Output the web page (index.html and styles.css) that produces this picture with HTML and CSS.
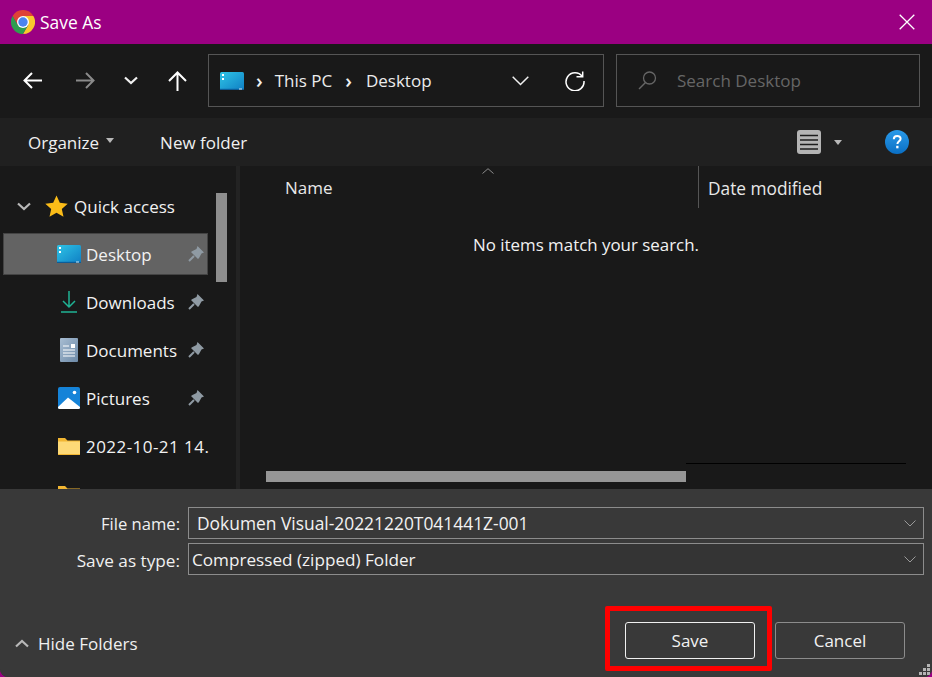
FILE: index.html
```html
<!DOCTYPE html>
<html lang="en">
<head>
    <meta charset="UTF-8">
    <meta name="viewport" content="width=device-width, initial-scale=1.0">
    <title>Save As</title>
    <link rel="stylesheet" href="styles.css">
</head>
<body>
    <div class="dialog">
        <div class="titlebar">
            <svg class="chrome-icon" width="24" height="24" viewBox="1 1 22 22">
                <path d="M21.53 6.500H12L7.240 14.750 2.470 6.500a11 11 0 0 1 19.060 0z" fill="#df4236"/>
                <path d="M21.530 6.500A11 11 0 0 1 12 23l4.760-8.250L12 6.500z" fill="#f9c72d"/>
                <path d="M12 23A11 11 0 0 1 2.470 6.500l4.770 8.250h9.520z" fill="#2f9e4f"/>
                <circle cx="12" cy="12" r="5.500" fill="#fff"/>
                <circle cx="12" cy="12" r="4.300" fill="#4a84ee"/>
            </svg>
            <span class="title">Save As</span>
            <svg class="close-icon" width="16" height="16" viewBox="0 0 16 16">
                <path d="M.7.7l14.6 14.6M15.300.7.7 15.300" stroke="#fff" stroke-width="1.300" fill="none"/>
            </svg>
        </div>

        <div class="navbar">
            <div class="nav-buttons">
                <svg class="nav-back" width="19" height="17" viewBox="0 0 19 17">
                    <path d="M1 8.500h18M9 1 1.500 8.500 9 16" stroke="#fff" stroke-width="2" fill="none"/>
                </svg>
                <svg class="nav-forward" width="19" height="17" viewBox="0 0 19 17">
                    <path d="M0 8.500h18M10 1l7.500 7.500L10 16" stroke="#8a8a8a" stroke-width="2" fill="none"/>
                </svg>
                <svg class="nav-recent" width="14" height="9" viewBox="0 0 14 9">
                    <path d="M1 1.500l6 5.500 6-5.500" stroke="#f0f0f0" stroke-width="2.200" fill="none"/>
                </svg>
                <svg class="nav-up" width="19" height="20" viewBox="0 0 19 20">
                    <path d="M9.500 20V2M1 10 9.500 1.500 18 10" stroke="#fff" stroke-width="2" fill="none"/>
                </svg>
            </div>
            <div class="address">
                <svg class="desktop-icon" width="24" height="18" viewBox="0 0 24 18">
                    <use href="#desktop-shape"/>
                </svg>
                <span class="crumb-sep">›</span>
                <span class="crumb">This PC</span>
                <span class="crumb-sep crumb-sep-wide">›</span>
                <span class="crumb">Desktop</span>
                <svg class="address-chevron" width="17" height="10" viewBox="0 0 17 10">
                    <path d="M.7.7l7.800 7.800L16.300.7" stroke="#f0f0f0" stroke-width="1.500" fill="none"/>
                </svg>
                <svg class="refresh" width="20" height="20" viewBox="0 0 20 20">
                    <path d="M17.300 5.500A9 9 0 1 0 19 10" stroke="#fff" stroke-width="1.500" fill="none"/>
                    <path d="M11.500 5.800h6.200V.5" stroke="#fff" stroke-width="1.500" fill="none"/>
                </svg>
            </div>
            <div class="search">
                <svg width="19" height="19" viewBox="0 0 19 19">
                    <circle cx="11.500" cy="7" r="6" stroke="#666" stroke-width="1.300" fill="none"/>
                    <path d="M7.500 11.500 1 18" stroke="#666" stroke-width="1.500" fill="none"/>
                </svg>
                <span class="search-text">Search Desktop</span>
            </div>
        </div>

        <div class="toolbar">
            <span class="tool-text">Organize</span>
            <span class="caret organize-caret"></span>
            <span class="tool-text new-folder">New folder</span>
            <svg class="view-icon" width="24" height="24" viewBox="0 0 24 24">
                <rect width="24" height="24" rx="3" fill="#b4b4b4"/>
                <path d="M3 5.500h18M3 10h18M3 14.500h18M3 19h18" stroke="#1c1c1c" stroke-width="1.300"/>
            </svg>
            <span class="caret view-caret"></span>
            <svg class="help-icon" width="24" height="24" viewBox="0 0 24 24">
                <defs>
                    <linearGradient id="helpfill" x1="0" y1="0" x2="0" y2="1">
                        <stop offset="0" stop-color="#2a9bea"/>
                        <stop offset="1" stop-color="#0a6fc4"/>
                    </linearGradient>
                </defs>
                <circle cx="12" cy="12" r="12" fill="url(#helpfill)"/>
                <path d="M8.800 9.200c0-4.200 6.800-4.200 6.800-.4 0 2.500-3.200 2.600-3.200 5.200" stroke="#fff" stroke-width="2" fill="none"/>
                <rect x="11.200" y="15.800" width="2.300" height="2.500" fill="#fff"/>
            </svg>
        </div>

        <div class="main">
            <div class="sidebar">
                <div class="tree">
                    <div class="tree-row quick-row">
                        <svg class="tree-chevron" width="14" height="9" viewBox="0 0 14 9">
                            <path d="M1 1.500l6 5.500 6-5.500" stroke="#b8b8b8" stroke-width="2.200" fill="none"/>
                        </svg>
                        <svg class="star" width="23" height="23" viewBox="0 0 23 22">
                            <path d="M11.500 0l3.300 7.300 7.900.9-5.900 5.300 1.700 7.800-7-4-7 4 1.700-7.800L.3 8.200l7.900-.9z" fill="#fbbc18"/>
                        </svg>
                        <span>Quick access</span>
                    </div>
                    <div class="tree-row selected">
                        <span class="tree-icon">
                            <svg width="24" height="18" viewBox="0 0 24 18">
                                <defs>
                                    <linearGradient id="deskfill" x1="0" y1="0" x2="1" y2="1">
                                        <stop offset="0" stop-color="#2fc4e6"/>
                                        <stop offset="1" stop-color="#0f7fc4"/>
                                    </linearGradient>
                                    <g id="desktop-shape">
                                        <rect width="24" height="18" rx="1.500" fill="url(#deskfill)"/>
                                        <rect y="16.800" width="24" height="1.200" fill="#0b5d99"/>
                                        <rect x="2" y="2" width="2" height="2" fill="#fff"/>
                                        <rect x="2" y="6" width="2" height="2" fill="#fff"/>
                                        <rect x="19" y="16.500" width="3" height="1" fill="#cfeaf7"/>
                                    </g>
                                    <g id="pin-shape">
                                        <path d="M9.500 0 16 6.500l-2.500 1L11 12l-1 1-7-7 1.500-1 4-2z" fill="#8f9aa3"/>
                                        <path d="M6 10 1 15" stroke="#8f9aa3" stroke-width="2"/>
                                    </g>
                                </defs>
                                <use href="#desktop-shape"/>
                            </svg>
                        </span>
                        <span class="tree-label">Desktop</span>
                        <svg class="pin" width="16" height="16"><use href="#pin-shape"/></svg>
                    </div>
                    <div class="tree-row">
                        <span class="tree-icon">
                            <svg width="16" height="22" viewBox="0 0 16 22">
                                <path d="M8 0v16M2 10l6 6 6-6" stroke="#1fb394" stroke-width="1.500" fill="none"/>
                                <path d="M0 21h16" stroke="#1fb394" stroke-width="1.500"/>
                            </svg>
                        </span>
                        <span class="tree-label">Downloads</span>
                        <svg class="pin" width="16" height="16"><use href="#pin-shape"/></svg>
                    </div>
                    <div class="tree-row">
                        <span class="tree-icon">
                            <svg width="18" height="24" viewBox="0 0 18 24">
                                <defs>
                                    <linearGradient id="docfill" x1="0" y1="0" x2="1" y2="1">
                                        <stop offset="0" stop-color="#a8bdd2"/>
                                        <stop offset="1" stop-color="#6d8aa8"/>
                                    </linearGradient>
                                </defs>
                                <rect width="18" height="24" rx="1" fill="url(#docfill)"/>
                                <path d="M3 8h6M3 12h12M3 15h12M3 18h12" stroke="#fff" stroke-width="1"/>
                                <rect x="11" y="6" width="4" height="4" fill="#fff"/>
                            </svg>
                        </span>
                        <span class="tree-label">Documents</span>
                        <svg class="pin" width="16" height="16"><use href="#pin-shape"/></svg>
                    </div>
                    <div class="tree-row">
                        <span class="tree-icon">
                            <svg width="22" height="22" viewBox="0 0 22 22">
                                <rect width="22" height="22" rx="2" fill="#1583d8"/>
                                <circle cx="16.500" cy="5.500" r="1.800" fill="#fff"/>
                                <path d="M0 20 10 10.500 22 20v.5a1.500 1.500 0 0 1-1.500 1.500h-19A1.500 1.500 0 0 1 0 20.500z" fill="#fff"/>
                            </svg>
                        </span>
                        <span class="tree-label">Pictures</span>
                        <svg class="pin" width="16" height="16"><use href="#pin-shape"/></svg>
                    </div>
                    <div class="tree-row">
                        <span class="tree-icon">
                            <svg width="22" height="17" viewBox="0 0 22 17">
                                <defs>
                                    <g id="folder-shape">
                                        <path d="M0 0h7l2.500 2.500H22V17H0z" fill="#f2b632"/>
                                        <path d="M0 3.500h22V16H0z" fill="#fdd977"/>
                                    </g>
                                </defs>
                                <use href="#folder-shape"/>
                            </svg>
                        </span>
                        <span class="tree-label date-label">2022-10-21 14.</span>
                    </div>
                    <div class="tree-row">
                        <span class="tree-icon">
                            <svg width="22" height="17" viewBox="0 0 22 17">
                                <use href="#folder-shape"/>
                            </svg>
                        </span>
                        <span class="tree-label">Dirantara</span>
                    </div>
                </div>
                <div class="side-scroll"><div class="side-thumb"></div></div>
            </div>
            <div class="splitter"></div>
            <div class="files">
                <div class="columns">
                    <div class="col-name">
                        <svg class="sort-arrow" width="12" height="6" viewBox="0 0 12 6">
                            <path d="M.5 5.500 6 .7l5.500 4.800" stroke="#8c8c8c" fill="none"/>
                        </svg>
                        Name
                    </div>
                    <div class="col-date">Date modified</div>
                </div>
                <p class="empty">No items match your search.</p>
                <div class="hscroll">
                    <div class="hscroll-line"></div>
                    <div class="hscroll-thumb"></div>
                </div>
            </div>
        </div>

        <div class="footer">
            <div class="field-row">
                <label class="name-label">File name:</label>
                <div class="field name-field">
                    <span>Dokumen Visual-20221220T041441Z-001</span>
                    <svg width="12" height="7" viewBox="0 0 12 7"><path d="M.5.5 6 6l5.500-5.500" stroke="#9a9a9a" fill="none"/></svg>
                </div>
            </div>
            <div class="field-row">
                <label class="type-label">Save as type:</label>
                <div class="field type-field">
                    <span>Compressed (zipped) Folder</span>
                    <svg width="12" height="7" viewBox="0 0 12 7"><path d="M.5.5 6 6l5.500-5.500" stroke="#9a9a9a" fill="none"/></svg>
                </div>
            </div>
            <div class="actions">
                <div class="hide-folders">
                    <svg width="14" height="9" viewBox="0 0 14 9">
                        <path d="M1 7.500 7 2l6 5.500" stroke="#b8b8b8" stroke-width="2.200" fill="none"/>
                    </svg>
                    <span>Hide Folders</span>
                </div>
                <button class="btn btn-save">Save</button>
                <button class="btn btn-cancel">Cancel</button>
            </div>
            <svg class="grip" width="12" height="12" viewBox="0 0 12 12">
                <path d="M8 0h3v3H8zM4 4h3v3H4zM8 4h3v3H8zM0 8h3v3H0zM4 8h3v3H4zM8 8h3v3H8z" fill="#b4b4b4"/>
            </svg>
        </div>

        <div class="highlight"></div>
    </div>
</body>
</html>
```

FILE: styles.css
```css
* { box-sizing: border-box; }
html, body { margin: 0; padding: 0; }
body { width: 932px; height: 677px; overflow: hidden; background: #9b0082; font-family: "Open Sans", "Noto Sans", Arial, sans-serif; font-size: 17px; color: #f2f2f2; }
svg { display: block; flex: none; }
.dialog { position: relative; width: 932px; height: 677px; display: flex; flex-direction: column; background: #393939; border-radius: 0 0 8px 8px; overflow: hidden; }

.titlebar { height: 44px; background: #9b0082; display: flex; align-items: center; padding: 0 17px 0 11px; }
.title { margin-left: 5px; font-size: 17.400px; color: #fff; flex: 1; }

.navbar { height: 74px; background: #191919; display: flex; align-items: center; padding: 0 12px 1px 0; }
.nav-buttons { width: 208px; display: flex; align-items: center; padding-left: 23px; }
.nav-forward { margin-left: 34px; }
.nav-recent { margin-left: 29px; }
.nav-up { margin-left: 30px; }
.address { width: 396px; height: 53px; border: 1px solid #555; display: flex; align-items: center; padding: 0 18px 0 11px; }
.crumb { font-size: 17px; color: #ececec; }
.crumb-sep { margin: 0 12px; font-size: 20px; line-height: 20px; color: #f0f0f0; font-weight: 600; }
.crumb-sep-wide { margin: 0 14px 0 13px; }
.address-chevron { margin-left: auto; margin-right: 36px; }
.search { width: 304px; height: 53px; margin-left: 12px; border: 1px solid #555; display: flex; align-items: center; padding-left: 21px; }
.search-text { margin-left: 20px; color: #666; font-size: 17px; }

.toolbar { height: 48px; background: #202020; display: flex; align-items: center; padding: 0 23px 0 28px; }
.tool-text { font-size: 17px; color: #f0f0f0; }
.caret { width: 0; height: 0; border-left: 4.500px solid transparent; border-right: 4.500px solid transparent; border-top: 5px solid #b8b8b8; }
.organize-caret { margin: 0 0 3px 7px; }
.new-folder { margin-left: 46px; margin-right: auto; }
.view-caret { margin: 0 43px 0 13px; }

.main { height: 323px; background: #191919; display: flex; }
.sidebar { width: 236px; display: flex; overflow: hidden; }
.tree { width: 216px; padding: 16px 0 0 3px; flex: none; }
.tree-row { height: 48px; width: 205px; display: flex; align-items: center; white-space: nowrap; font-size: 17px; border: 1px solid transparent; }
.tree-chevron { margin-left: 13px; }
.star { margin-left: 14px; margin-right: 6px; }
.selected { height: 42px; margin: 3px 0; background: #636363; border-color: #444; }
.tree-icon { flex: none; width: 28px; margin-left: 51px; margin-right: 1px; display: flex; justify-content: center; }
.tree-label { flex: none; margin-left: 2px; }
.date-label { letter-spacing: 0.450px; }
.pin { margin-left: auto; margin-right: 3px; }
.side-scroll { width: 20px; padding: 27px 0 0 0; }
.side-thumb { width: 11px; height: 89px; background: #8e8e8e; }
.splitter { width: 4px; background: #232323; }

.files { flex: 1; position: relative; display: flex; flex-direction: column; }
.columns { height: 42px; display: flex; }
.col-name { position: relative; width: 459px; padding: 10px 0 0 45px; color: #e8e8e8; border-right: 1px solid #555; }
.sort-arrow { position: absolute; left: 242px; top: 2px; }
.col-date { padding: 11px 0 0 9px; font-size: 17.300px; color: #e8e8e8; }
.empty { margin: 25px 0 0 233px; font-size: 16.900px; color: #f2f2f2; }
.hscroll { margin-top: auto; height: 26px; position: relative; }
.hscroll-thumb { position: absolute; left: 26px; top: 8px; width: 420px; height: 11px; background: #969696; }
.hscroll-line { position: absolute; left: 446px; top: 0; width: 220px; height: 1px; background: #000; }

.footer { flex: 1; position: relative; background: #393939; padding-top: 18px; }
.field-row { display: flex; align-items: center; height: 32px; margin-bottom: 4px; }
.field-row label { width: 180px; text-align: right; color: #f0f0f0; }
.name-label { font-size: 16.600px; }
.type-label { font-size: 17.200px; padding-top: 2px; }
.field { width: 736px; height: 32px; margin-left: 8px; border: 1px solid #8c8c8c; display: flex; align-items: center; justify-content: space-between; padding-right: 7px; color: #f2f2f2; }
.name-field { padding-left: 8px; font-size: 17.400px; }
.type-field { padding-left: 3px; padding-top: 1px; font-size: 17.150px; background: #343434; }
.actions { position: relative; display: flex; align-items: center; margin-top: 47px; padding-left: 15px; height: 37px; }
.hide-folders { display: flex; align-items: center; gap: 9px; font-size: 17px; color: #f0f0f0; margin-right: auto; padding-top: 6px; }
.btn { width: 130px; height: 37px; font-family: inherit; font-size: 17px; color: #f2f2f2; background: #393939; border-radius: 3px; padding: 0; }
.btn-save { border: 1px solid #f0f0f0; }
.btn-cancel { border: 1px solid #8c8c8c; margin: 0 27px 0 20px; }
.grip { position: absolute; right: 1px; bottom: 1px; }

/* red annotation over the save button */
.highlight { position: absolute; left: 605px; top: 606px; width: 167px; height: 65px; border: 5px solid #ff0000; border-radius: 2px; }
```
